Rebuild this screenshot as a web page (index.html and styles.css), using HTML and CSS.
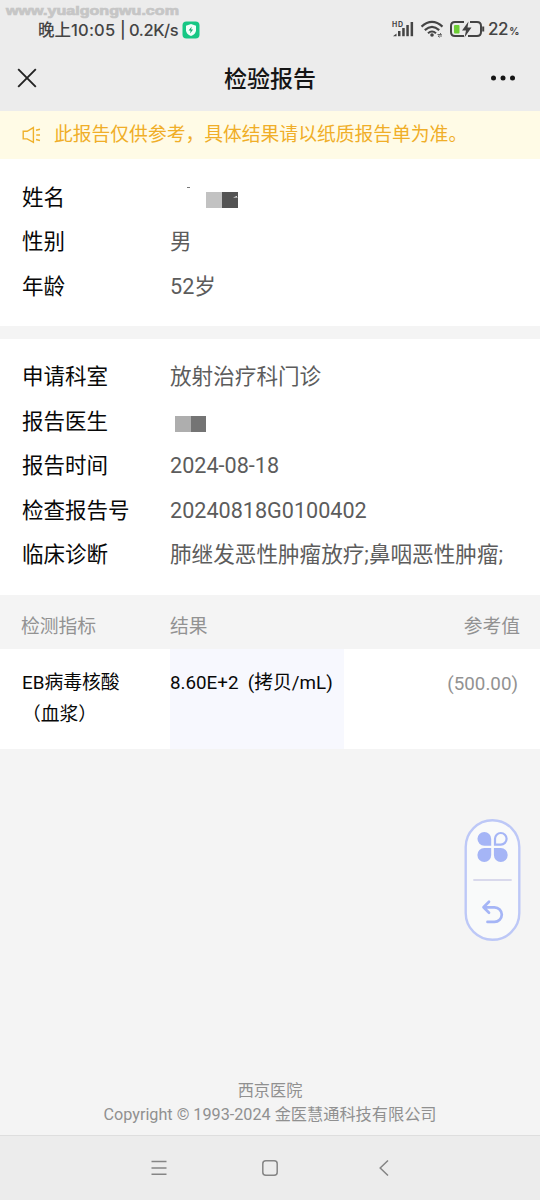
FILE: index.html
```html
<!DOCTYPE html>
<html lang="zh-CN">
<head>
<meta charset="utf-8">
<title>检验报告</title>
<link rel="stylesheet" href="styles.css">
</head>
<body>
<div class="screen">
  <svg class="watermark" width="190" height="20" viewBox="0 0 190 20"><text x="6" y="15" textLength="173" lengthAdjust="spacingAndGlyphs">www.yuaigongwu.com</text></svg>
  <header class="top">
    <div class="status">
      <span class="clock">晚上</span><span class="time">10:05</span><span class="bar">|</span><span class="speed">0.2K/s</span>
      <svg class="shield" width="18" height="18" viewBox="0 0 18 18"><rect x=".5" y=".5" width="17" height="17" rx="4" fill="#16c784"/><path d="M9 3l5 1.800v4.400c0 2.600-2 4.500-5 5.800-3-1.300-5-3.200-5-5.800V4.800z" fill="#f2fffa"/><path d="M9.700 5.500L6.600 9.500h2l-.5 3 3-4h-2z" fill="#16a870"/></svg>
      <svg class="indicators" width="94" height="22" viewBox="0 0 94 22">
        <text class="hd" x="1" y="8" textLength="11">HD</text>
        <g fill="#444"><path d="M2 17.200l3.500-2.700v2.700z"/><rect x="7" y="12" width="2.500" height="5.200"/><rect x="11.200" y="9" width="2.500" height="8.200"/><rect x="15.300" y="6" width="2.500" height="11.200"/><rect x="19.600" y="3" width="2.500" height="14.200"/></g>
        <g fill="none" stroke="#444" stroke-width="2.100"><path d="M30.500 7.600Q41-1.800 51.500 7.600M33.800 11.100Q41 4.600 48.200 11.100M37 14.300Q41 10.700 45 14.300"/></g>
        <circle cx="41" cy="16" r="1.800" fill="#444"/>
        <path d="M46.500 15.500h4l-1.500-1.500M51 17h-4l1.500 1.500" fill="none" stroke="#666" stroke-width="1"/>
        <path d="M73 3H64q-4 0-4 4v6q0 4 4 4h9M79 3h7q4 0 4 4v6q0 4-4 4h-9" fill="none" stroke="#444" stroke-width="2"/>
        <rect x="63" y="6" width="5.500" height="8.500" rx="1" fill="#6dce35"/>
        <path d="M77.500 2.500l-6.500 9h4l-1.500 7 7-10h-4z" fill="#444"/>
        <path d="M92.200 7.500v5" stroke="#444" stroke-width="2"/>
      </svg>
      <span class="percent">22<small>%</small></span>
    </div>
    <div class="nav">
      <svg width="20" height="20" viewBox="0 0 20 20"><path d="M1.200 1.200l17.600 17.600M18.800 1.200L1.200 18.800" stroke="#222" stroke-width="1.900" fill="none"/></svg>
      <h1>检验报告</h1>
      <svg width="26" height="8" viewBox="0 0 26 8" fill="#151515"><circle cx="3.500" cy="4" r="2.500"/><circle cx="13" cy="4" r="2.500"/><circle cx="22.500" cy="4" r="2.500"/></svg>
    </div>
  </header>

  <div class="notice">
    <svg width="20" height="20" viewBox="0 0 20 20" fill="none" stroke="#efb12c" stroke-width="1.400"><path d="M1.200 6.300H5.200L11.400 2.600v14.800L5.200 13.900H1.200z"/><path d="M14 5.300l4-1M14.300 10h3.700M14 14.500l4 1"/></svg>
    <span>此报告仅供参考，具体结果请以纸质报告单为准。</span>
  </div>

  <dl class="info patient">
    <dt>姓名</dt><dd><svg class="mosaic name-mask" width="70" height="24" viewBox="0 0 70 24"><path d="M17 1.500h3" stroke="#777" stroke-width="1"/><path d="M36 6h16v16H36z" fill="#c2c2c2"/><path d="M52 6h16v16H52z" fill="#535353"/><path d="M63 11.500l4-1.500v1l1 .5z" fill="#fff"/></svg></dd>
    <dt>性别</dt><dd>男</dd>
    <dt>年龄</dt><dd>52岁</dd>
  </dl>

  <dl class="info request">
    <dt>申请科室</dt><dd>放射治疗科门诊</dd>
    <dt>报告医生</dt><dd><svg class="mosaic" width="40" height="24" viewBox="0 0 40 24"><path d="M5 7h16v16H5z" fill="#aeaeae"/><path d="M21 7h15v16H21z" fill="#747474"/></svg></dd>
    <dt>报告时间</dt><dd>2024-08-18</dd>
    <dt>检查报告号</dt><dd>20240818G0100402</dd>
    <dt>临床诊断</dt><dd>肺继发恶性肿瘤放疗;鼻咽恶性肿瘤;</dd>
  </dl>

  <div class="row head"><span class="item">检测指标</span><span class="result">结果</span><span class="range">参考值</span></div>
  <div class="row body"><span class="item">EB病毒核酸<br>（血浆）</span><span class="result">8.60E+2&nbsp; (拷贝/mL)</span><span class="range">(500.00)</span></div>

  <svg class="float-menu" width="58" height="124" viewBox="0 0 58 124">
    <rect x="2.700" y="2.200" width="53.600" height="119.600" rx="26.800" fill="#f9fafa" stroke="#bdc8f7" stroke-width="2.400"/>
    <g fill="#a5b5f6"><path d="M21.300 14a6.900 6.900 0 0 1 6.900 6.900v6.800h-6.900a6.850 6.850 0 0 1 0-13.700z"/><path d="M21.300 30.100h6.900v6.900a6.900 6.900 0 1 1-6.900-6.900z"/><path d="M30.900 30.100h6.900a6.900 6.900 0 1 1-6.900 6.900z"/></g>
    <path d="M32 26.600v-5.800a5.800 5.800 0 1 1 5.800 5.800z" fill="none" stroke="#a5b5f6" stroke-width="2.200"/>
    <path d="M11 62h37" stroke="#d9d9ec" stroke-width="1.800" stroke-linecap="round"/>
    <path d="M26 83l-5.500 5.500 5.500 5.500M21.500 88.500H31.500a7.300 7.300 0 0 1 0 14.600H24.500" transform="translate(0 .8)" fill="none" stroke="#a5b5f6" stroke-width="2.700" stroke-linecap="round" stroke-linejoin="round"/>
  </svg>

  <footer class="copyright">西京医院<br>Copyright © 1993-2024 金医慧通科技有限公司</footer>
  <div class="system">
    <svg width="16" height="16" viewBox="0 0 16 16"><path d="M.5 1.500h15M.5 8h15M.5 14.200h15"/></svg>
    <svg width="16" height="16" viewBox="0 0 16 16"><rect x=".8" y=".8" width="14.400" height="14.400" rx="3"/></svg>
    <svg width="16" height="16" viewBox="0 0 16 16"><path d="M12 .5L4.200 8l7.800 7.500"/></svg>
  </div>
</div>
</body>
</html>
```
FILE: styles.css
```css
* { box-sizing: border-box; }
body { margin: 0; font-family: Roboto, "Noto Sans CJK SC", sans-serif; }
.screen { position: relative; display: flex; flex-direction: column; width: 540px; height: 1200px; background: #f4f4f4; overflow: hidden; }
.watermark { position: absolute; left: 0; top: 0; }
.watermark text { font: 700 12px "Liberation Sans", sans-serif; fill: #c6c6c6; stroke: #c6c6c6; stroke-width: .7; }

.top { height: 111px; flex: none; background: #ececec; }
.status { display: flex; align-items: center; height: 42px; padding: 18px 20px 0 38px; font: 500 16.500px/24px Inter, "Noto Sans CJK SC", sans-serif; color: #444; white-space: nowrap; }
.clock { width: 33px; }
.time { width: 49px; letter-spacing: .2px; }
.bar { width: 9px; }
.speed { width: 53px; letter-spacing: -.4px; }
.shield { flex: none; }
.indicators { flex: none; margin-left: auto; }
.hd { font: 700 7px Inter, sans-serif; fill: #444; }
.percent { width: 32px; margin-left: 3px; font-size: 17px; letter-spacing: -.4px; }
.percent small { margin-left: 1px; font-size: 10px; font-weight: 700; }
.nav { display: flex; align-items: center; justify-content: space-between; height: 72px; padding: 0 24px 0 17px; }
.nav h1 { margin: 4px 0 0 13px; font-size: 23px; line-height: 32px; font-weight: 500; color: #151515; }

.notice { display: flex; align-items: center; gap: 12px; flex: none; height: 48px; padding-left: 22px; background: #fffbe6; color: #f0ae28; font-size: 18.800px; line-height: 28px; }
.info { display: grid; grid-template-columns: 148px 1fr; grid-auto-rows: 44.500px; flex: none; margin: 0; padding: 17px 0 0 22px; background: #fff; font-size: 21.500px; line-height: 44.500px; white-space: nowrap; }
.info dt { color: #080808; }
.info dd { margin: 0; color: #5c5c5c; font-size: 21.600px; }
.patient { height: 167px; padding-top: 16.600px; }
.request { height: 256px; margin-top: 13px; padding-top: 16px; }
.mosaic { display: block; margin-top: 9px; }
.name-mask { margin-top: 10.400px; }

.row { display: grid; grid-template-columns: 148px 174px 1fr; flex: none; padding: 0 20px 0 22px; font-size: 18.800px; line-height: 32px; }
.range { text-align: right; color: #929292; }
.head { height: 54px; padding-top: 16px; color: #929292; }
.head .item { margin-left: -1px; }
.body { height: 100px; background: #fff; color: #080808; }
.body span { padding-top: 18px; }
.body .result { background: #f7f8fe; }
.body .range { padding-top: 19px; padding-right: 2px; }

.float-menu { position: absolute; left: 463px; top: 818px; }
.copyright { margin-top: auto; padding-bottom: 9px; text-align: center; font-size: 16.200px; line-height: 23.500px; color: #909090; }
.system { display: flex; align-items: center; justify-content: space-between; flex: none; height: 65px; padding: 0 148px 0 151px; border-top: 1px solid #dedede; background: #ececec; }
.system svg { fill: none; stroke: #858585; stroke-width: 1.500; }
.system svg:nth-child(2) { margin-left: -3px; }
```
